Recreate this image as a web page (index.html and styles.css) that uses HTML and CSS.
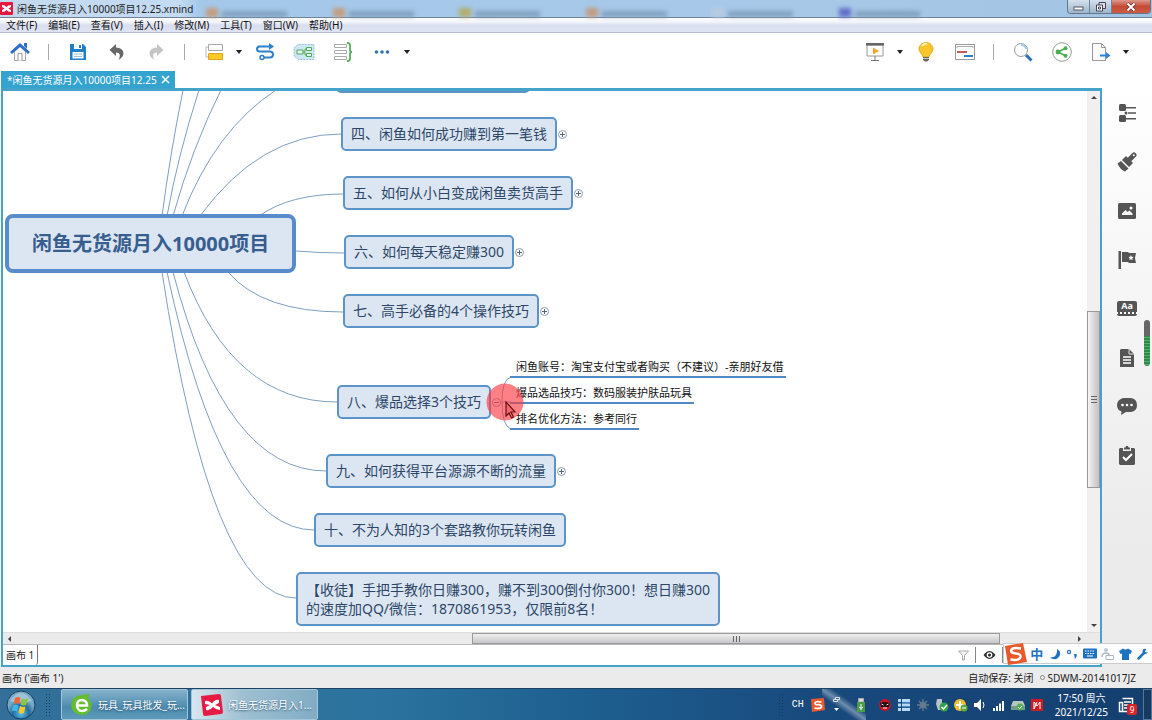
FILE: index.html
```
<!DOCTYPE html>
<html lang="zh-CN">
<head>
<meta charset="utf-8">
<title>闲鱼无货源月入10000项目12.25.xmind</title>
<link rel="stylesheet" href="styles.css">
</head>
<body>
<header class="titlebar">
  <svg class="app-logo" width="13" height="13" viewBox="0 0 13 13"><rect width="13" height="13" rx="1" fill="#e5173f"/><path d="M2 3q3 0 4.500 2Q8 3 11 3v2L8.500 6.500 11 8v2Q8 10 6.500 8 5 10 2 10V8l2.500-1.500L2 5z" fill="#fff"/></svg>
  <h1 class="title">闲鱼无货源月入10000项目12.25.xmind</h1>
  <div class="backdrop"><i class="o"></i><i class="o"></i><i class="y"></i><i class="o"></i><i class="w"></i><i class="b"></i></div>
  <div class="window-buttons">
    <button aria-label="最小化"><svg width="12" height="10" viewBox="0 0 12 10"><rect x="1" y="5" width="9" height="3" fill="#fff" stroke="#556" stroke-width="1"/></svg></button>
    <button aria-label="还原"><svg width="12" height="12" viewBox="0 0 12 12"><path d="M4 1.500h6.500v6H4z" fill="#dde" stroke="#445"/><path d="M1.500 4h6v6h-6z" fill="#fff" stroke="#445"/><path d="M3.500 6h2v2h-2z" fill="none" stroke="#445"/></svg></button>
    <button class="close" aria-label="关闭"><svg width="12" height="10" viewBox="0 0 12 10"><path d="M2.500 1.500l7 7M9.500 1.500l-7 7" stroke="#633" stroke-width="3.500"/><path d="M2.500 1.500l7 7M9.500 1.500l-7 7" stroke="#fff" stroke-width="2"/></svg></button>
  </div>
</header>

<nav class="menubar">
  <button>文件(F)</button><button>编辑(E)</button><button>查看(V)</button><button>插入(I)</button><button>修改(M)</button><button>工具(T)</button><button>窗口(W)</button><button>帮助(H)</button>
</nav>

<div class="toolbar">
  <div class="tools">
    <button class="tool" aria-label="主页"><svg width="20" height="20" viewBox="0 0 20 20"><path d="M4.500 9.500v9h11v-9L10 4.500z" fill="#fafafa" stroke="#aaa"/><path d="M8 18.500v-7h4v7" fill="#fff" stroke="#999"/><path d="M1 11L10 3l9 8" fill="none" stroke="#2c6fc4" stroke-width="3"/><path d="M14 1h3v6l-3-3z" fill="#2c6fc4"/></svg></button>
    <span class="sep"></span>
    <button class="tool" aria-label="保存"><svg width="18" height="18" viewBox="0 0 18 18"><path d="M1 1h13l3 3v13H1z" fill="#1f7fc8"/><path d="M5 1h8v5H5z" fill="#fff"/><path d="M10 2h2v3h-2z" fill="#1f7fc8"/><path d="M3.500 9h11v6.500h-11z" fill="#fff"/><path d="M5 11h8M5 13.500h8" stroke="#9bc4e6"/></svg></button>
    <button class="tool" aria-label="撤销"><svg width="18" height="18" viewBox="0 0 18 18"><path d="M8 1L1.500 7 8 13V9.500c4 0 5 3 2.500 7.500C18 13 17 5 8 4.500z" fill="#686868"/></svg></button>
    <button class="tool" aria-label="重做"><svg width="18" height="18" viewBox="0 0 18 18"><path d="M10 1l6.500 6L10 13V9.500c-4 0-5 3-2.500 7.500C0 13 1 5 10 4.500z" fill="#c5c5c5"/></svg></button>
    <span class="sep"></span>
    <button class="tool" aria-label="主题"><svg width="20" height="18" viewBox="0 0 20 18"><path d="M4.500 1.500h14v6h-14z" fill="#fff" stroke="#aaa"/><path d="M4 4H2v10h2" fill="none" stroke="#bbb"/><path d="M4.500 10.500h14v6h-14z" fill="#fbc926" stroke="#d9a720"/></svg></button>
    <button class="drop" aria-label="更多主题"></button>
    <button class="tool" aria-label="联系"><svg width="20" height="18" viewBox="0 0 20 18"><path d="M3 3.500h13M16 8.500H5c-4 0-4-5 0-5M5 8.500h10c4 0 4 6 0 6H8" fill="none" stroke="#2c80cc" stroke-width="2"/><path d="M14 0l5 3.500L14 7z" fill="#2c80cc"/><circle cx="7" cy="14.500" r="2" fill="#fff" stroke="#2c80cc" stroke-width="1.500"/></svg></button>
    <button class="tool" aria-label="外框"><svg width="22" height="18" viewBox="0 0 22 18"><path d="M1 5l4-3.500h16v15H5L1 13z" fill="#cfe7f3" stroke="#8fc1dc" stroke-dasharray="2 1"/><path d="M4 7h6v4H4zM13.500 4.500h5v3h-5zM13.500 10.500h5v3h-5zM10 9h2M13.500 6H12v6h1.500" fill="#eaf6f2" stroke="#4caa55"/></svg></button>
    <button class="tool" aria-label="概要"><svg width="22" height="20" viewBox="0 0 22 20"><path d="M2.500 2.500h12v3h-12zM2.500 8.500h12v3h-12zM2.500 14.500h12v3h-12z" fill="#fff" stroke="#aaa"/><path d="M15 1q3 0 3 2v5q0 2 2 2-2 0-2 2v5q0 2-3 2" fill="none" stroke="#58ad5d" stroke-width="1.800"/></svg></button>
    <button class="tool" aria-label="更多"><svg width="16" height="6" viewBox="0 0 16 6"><g fill="#3475ad"><circle cx="2.500" cy="3" r="1.800"/><circle cx="8" cy="3" r="1.800"/><circle cx="13.500" cy="3" r="1.800"/></g></svg></button>
    <button class="drop" aria-label="更多选项"></button>
  </div>
  <div class="tools tools-right">
    <button class="tool" aria-label="演示"><svg width="20" height="20" viewBox="0 0 20 20"><path d="M2 3h16v11H2z" fill="#fff" stroke="#999"/><path d="M1 1h18v2.500H1z" fill="#666"/><path d="M8 5.500l6 3.500-6 3.500z" fill="#f5a32a"/><path d="M10 14v4M6 18.500h8" stroke="#777"/></svg></button>
    <button class="drop" aria-label="演示选项"></button>
    <button class="tool" aria-label="头脑风暴"><svg width="18" height="20" viewBox="0 0 18 20"><path d="M9 .5c4 0 7 3 7 6.500 0 4-4 5-4 8H6c0-3-4-4-4-8C2 3.500 5 .5 9 .5z" fill="#fbc62b" stroke="#e2a91f"/><path d="M5 4q2-3 5-2" stroke="#fff3b8" stroke-width="2" fill="none"/><path d="M6 15h6v3l-2 1.500H8L6 18z" fill="#6a6558"/><path d="M6 16.500h6" stroke="#ccc"/></svg></button>
    <button class="tool" aria-label="甘特图"><svg width="20" height="16" viewBox="0 0 20 16"><path d="M.5.5h19v15H.5z" fill="#fff" stroke="#999"/><path d="M2 4V2.500h16V4" fill="none" stroke="#aaa"/><path d="M2 8h10" stroke="#c45b5b" stroke-width="2"/><path d="M9 12h9" stroke="#2c80c8" stroke-width="2"/></svg></button>
    <span class="sep"></span>
    <button class="tool" aria-label="搜索"><svg width="20" height="20" viewBox="0 0 20 20"><circle cx="8" cy="8" r="6.500" fill="#fff" stroke="#999"/><path d="M8 3q4 0 5 4" fill="none" stroke="#8ac6ee" stroke-width="1.500"/><path d="M13 13l5.500 5.500" stroke="#2c6fb4" stroke-width="3"/></svg></button>
    <button class="tool" aria-label="分享"><svg width="20" height="20" viewBox="0 0 20 20"><circle cx="10" cy="10" r="9.300" fill="#fff" stroke="#8c9c8c"/><path d="M14 6l-8 4 8 4" fill="none" stroke="#4aae4d" stroke-width="1.500"/><g fill="#4aae4d"><circle cx="13.500" cy="6.200" r="2"/><circle cx="6" cy="10" r="2.400"/><circle cx="13.500" cy="13.800" r="2"/></g></svg></button>
    <button class="tool" aria-label="导出"><svg width="20" height="20" viewBox="0 0 20 20"><path d="M1.500 1.500h9l4 4v13h-13z" fill="#fafafa" stroke="#999"/><path d="M10.500 1.500v4h4" fill="none" stroke="#999"/><path d="M9 13.500h8" stroke="#2f85dd" stroke-width="2"/><path d="M15 10l4.500 3.500L15 17z" fill="#2f85dd"/></svg></button>
    <button class="drop" aria-label="导出选项"></button>
  </div>
</div>

<div class="tabbar">
  <div class="tab"><span>*闲鱼无货源月入10000项目12.25</span><button class="tab-close" aria-label="关闭标签"><svg width="9" height="9" viewBox="0 0 9 9"><path d="M1 1l7 7M8 1L1 8" stroke="#fff" stroke-width="1.500"/></svg></button></div>
</div>

<div class="workspace">
  <section class="editor">
    <div class="view">
      <main class="map">
        <svg class="links" width="1084" height="541"><g transform="translate(-3 -91)" fill="none" stroke="#7d9fc0">
          <path d="M162 216Q170 155 183 90M167 216Q178 155 199 90M173 216Q192 148 221 90M182 216Q215 130 276 90"/>
          <path d="M200 216Q260 134 341 134M259 216Q290 194 343 194M296 251Q320 253 344 253M228 272Q262 312 343 312"/>
          <path d="M184 272Q233 402 337 402M173 272Q225 471 326 471M167 272Q222 530 314 530M162 272Q212 598 296 598"/>
          <path d="M502 402Q502 379 511 377M502 402H511M502 402Q502 426 511 429"/>
        </g></svg>
        <div class="central">闲鱼无货源月入10000项目</div>
        <div class="topic t3"><div class="node"></div></div>
        <div class="topic t4"><div class="node">四、闲鱼如何成功赚到第一笔钱</div><button class="fold" aria-label="展开"></button></div>
        <div class="topic t5"><div class="node">五、如何从小白变成闲鱼卖货高手</div><button class="fold" aria-label="展开"></button></div>
        <div class="topic t6"><div class="node">六、如何每天稳定赚300</div><button class="fold" aria-label="展开"></button></div>
        <div class="topic t7"><div class="node">七、高手必备的4个操作技巧</div><button class="fold" aria-label="展开"></button></div>
        <div class="topic t8"><div class="node">八、爆品选择3个技巧</div><button class="fold open" aria-label="收起"></button></div>
        <ul class="subtopics">
          <li>闲鱼账号<span class="mark">：</span>淘宝支付宝或者购买（不建议）-亲朋好友借</li>
          <li>爆品选品技巧<span class="mark">：</span>数码服装护肤品玩具</li>
          <li>排名优化方法<span class="mark">：</span>参考同行</li>
        </ul>
        <div class="topic t9"><div class="node">九、如何获得平台源源不断的流量</div><button class="fold" aria-label="展开"></button></div>
        <div class="topic t10"><div class="node">十、不为人知的3个套路教你玩转闲鱼</div></div>
        <div class="topic t11"><div class="node">【收徒】手把手教你日赚300<span class="mark">，</span>赚不到300倒付你300<span class="mark">！</span>想日赚300<br>的速度加QQ/微信<span class="mark">：</span>1870861953<span class="mark">，</span>仅限前8名<span class="mark">！</span></div></div>
        <div class="pointer"><svg width="38" height="38" viewBox="0 0 38 38"><circle cx="19" cy="19" r="18.500" fill="#fb3c43" fill-opacity=".65"/><path d="M20 19v14l3-3 2.500 5 2-1-2.500-5h4z" fill="#f4696e" stroke="#611" stroke-width="1.200"/></svg></div>
      </main>
      <div class="vscroll"><span class="arrow up"></span><span class="before"></span><span class="thumb"></span><span class="after"></span><span class="arrow down"></span></div>
    </div>
    <div class="hscroll"><span class="arrow left"></span><span class="before"></span><span class="thumb"></span><span class="after"></span><span class="arrow right"></span></div>
    <div class="sheets">
      <button class="sheet">画布 1</button>
      <div class="sheet-tools">
        <button aria-label="筛选"><svg width="11" height="11" viewBox="0 0 11 11"><path d="M.5 1h10L6.500 5.500V10h-2V5.500z" fill="#f4f4f4" stroke="#aaa"/></svg></button>
        <button class="eye" aria-label="显示"><svg width="13" height="10" viewBox="0 0 13 10"><path d="M.5 5Q6.500-3 12.500 5 6.500 13 .5 5z" fill="#333"/><circle cx="6.500" cy="5" r="2.800" fill="#fff"/><circle cx="6.500" cy="5" r="1.600" fill="#333"/></svg></button>
      </div>
    </div>
  </section>
  <aside class="panels">
    <button aria-label="大纲"><svg width="18" height="18" viewBox="0 0 18 18" fill="#555"><rect x="1" width="7" height="7" rx="1.500"/><rect x="1" y="11" width="7" height="7" rx="1.500"/><path d="M8 3h10v1.500H8zM8 14h10v1.500H8zM10 8.200h8v1.600h-8z"/><circle cx="8" cy="9" r="1.500"/></svg></button>
    <button aria-label="格式"><svg width="20" height="20" viewBox="0 0 20 20"><path d="M.5 11.500L4 9l7.500 7.500L8 19.500q-5-2-7.500-8z" fill="#555"/><path d="M5 8l4-4 7 7-4 4z" fill="#555"/><path d="M13 7l4-4" stroke="#555" stroke-width="5" stroke-linecap="round"/><circle cx="16.800" cy="3.200" r="1" fill="#fff"/></svg></button>
    <button aria-label="图片"><svg width="18" height="16" viewBox="0 0 18 16"><rect width="18" height="16" rx="1.500" fill="#555"/><path d="M4 12V10.500L7.500 7l2 2 2-1.500 3 3V12z" fill="#fff"/><circle cx="13" cy="5" r="1.500" fill="#fff"/></svg></button>
    <button aria-label="图标"><svg width="18" height="18" viewBox="0 0 18 18"><path d="M.5 0H3v18H.5zM4 1h6l1 1h7l-1 5 1 5h-7l-1-1H4z" fill="#555"/><path d="M13 4l.8 1.700 1.800.3-1.300 1.300.3 1.800-1.600-.9-1.600.9.300-1.800L10.400 6l1.800-.3z" fill="#fff"/></svg></button>
    <button class="style-panel" aria-label="风格"><span>Aa</span></button>
    <button aria-label="备注"><svg width="14" height="18" viewBox="0 0 14 18"><path d="M1 0h8l5 5v13H0V1z" fill="#555"/><path d="M9 0v5h5" fill="none" stroke="#ddd"/><path d="M3 8h8M3 11h8M3 14h8" stroke="#fff" stroke-width="1.300"/></svg></button>
    <button aria-label="批注"><svg width="20" height="17" viewBox="0 0 20 17"><path d="M6 0h8q6 1 6 7t-6 7H9l-5 3 .5-3.500Q0 12 0 7t6-7z" fill="#555"/><g fill="#fff"><circle cx="5.500" cy="7" r="1.300"/><circle cx="10" cy="7" r="1.300"/><circle cx="14.500" cy="7" r="1.300"/></g></svg></button>
    <button aria-label="任务"><svg width="16" height="19" viewBox="0 0 16 19"><path d="M1 2h3v3h8V2h3l1 1v15l-1 1H1l-1-1V3z" fill="#555"/><path d="M5 3.500V1.500h1.500L7 0h2l.5 1.500H11v2z" fill="#555"/><path d="M4 11l3 3 6-6" fill="none" stroke="#fff" stroke-width="2"/></svg></button>
  </aside>
  <div class="meter"></div>
  <div class="ime">
    <svg class="ime-logo" width="24" height="24" viewBox="0 0 24 24"><path d="M1 4L19 1l4 19-19 3z" fill="#e8592b"/><path d="M17 6.500Q8 5 7 8.500q0 2.500 5 3 5 .5 4.500 3.500-1 4-10 2.500" fill="none" stroke="#fff" stroke-width="2.500"/></svg>
    <button class="zh">中</button>
    <button aria-label="半角"><svg width="12" height="12" viewBox="0 0 12 12"><path d="M8 1q4 2 3 6-2 5-7 4-2-.5-3-2 4 1 6-2 1.500-3 1-6z" fill="#1e73c0"/></svg></button>
    <button aria-label="标点"><svg width="12" height="12" viewBox="0 0 12 12"><circle cx="3" cy="4" r="1.600" fill="none" stroke="#1e73c0" stroke-width="1.300"/><path d="M8 6h2.500q1 3-2 5 .5-1.500 0-2.500z" fill="#1e73c0"/></svg></button>
    <button aria-label="软键盘"><svg width="14" height="11" viewBox="0 0 14 11"><rect width="14" height="10" y=".5" rx="1" fill="#1e73c0"/><path d="M2 3h10M2 5.500h10" stroke="#fff" stroke-dasharray="1.500 1"/><path d="M4 8h6" stroke="#fff"/></svg></button>
    <button aria-label="账号"><svg width="13" height="13" viewBox="0 0 13 13"><circle cx="5" cy="3" r="2" fill="#bbc8d2"/><path d="M1 10q0-4 4-4 3 0 3 2" fill="none" stroke="#aab8c4" stroke-width="1.500"/><path d="M5 8.500h7.500v4H5z" fill="#fff" stroke="#aab8c4"/></svg></button>
    <button aria-label="皮肤"><svg width="13" height="12" viewBox="0 0 13 12"><path d="M4 .5q2.500 2 5 0L13 3l-1.500 3L10 5.500V12H3V5.500L1.500 6 0 3z" fill="#1e73c0"/></svg></button>
    <button aria-label="工具箱"><svg width="12" height="12" viewBox="0 0 12 12"><path d="M1.500 10.500l5-5" stroke="#1e73c0" stroke-width="2.500" stroke-linecap="round"/><path d="M9.500 1Q5 0 5.500 4.500 8 8 11.500 4L9 4.500 7.800 3.500z" fill="#1e73c0"/></svg></button>
  </div>
</div>

<footer class="statusbar"><span>画布 ('画布 1')</span><span class="status-right"><span>自动保存: 关闭</span><span class="user"><i></i>SDWM-20141017JZ</span></span></footer>

<div class="taskbar">
  <button class="start" aria-label="开始"><svg width="30" height="30" viewBox="0 0 30 30"><defs><radialGradient id="orb" cy=".8"><stop offset="0" stop-color="#58c3e8"/><stop offset=".6" stop-color="#246b9d"/><stop offset="1" stop-color="#76a9c5"/></radialGradient></defs><circle cx="15" cy="15" r="14" fill="url(#orb)" stroke="#183f61"/><path d="M4 11Q15-5 26 11 15 15 4 11z" fill="#fff" opacity=".3"/><path d="M9 8q3-2 5.500 0L13 14q-3-1.500-5.500 0z" fill="#f1653a"/><path d="M16 8.500q3 1.500 6 0L20 15q-3 1-5.500-.5z" fill="#8cc73e"/><path d="M7 15.500q3-1.500 5.500 0L11 21.500q-3-1.500-5.500 0z" fill="#41b6ed"/><path d="M14 16q3 1.500 5.500.5L18 23q-3 1-5.500-.5z" fill="#fbc927"/></svg></button>
  <span class="grip"></span>
  <button class="task"><svg width="24" height="24" viewBox="0 0 24 24"><path d="M18 5q3-3 1-4-2 0-5 1-9-1-12 6-3 9 5 13 8 3 13-3 4-7-2-13z" fill="#63bd2c"/><path d="M17 12.500H7q0-5.500 5-5.500 5 .5 5 5.500zM7 12.500Q7.500 18 12 18q3 0 5-2" fill="none" stroke="#fff" stroke-width="2.500"/></svg><span>玩具_玩具批发_玩...</span></button>
  <button class="task active"><svg width="24" height="24" viewBox="0 0 24 24"><path d="M1 3l18-2q2 0 2 2l2 16q0 2-2 2L5 23q-2 0-2-2z" fill="#e51b43"/><path d="M5 8q4-1 7 2.500Q15 6 19 7v3l-4 2 5 2v3q-4 0-7-3-3 4-7 3v-3l4-2-5-1z" fill="#fff"/></svg><span>闲鱼无货源月入1...</span></button>
  <div class="tray">
    <span class="grip"></span>
    <span class="lang">CH</span>
    <svg class="ti" width="14" height="14" viewBox="0 0 14 14"><path d="M0 1L13 0l1 12-13 2z" fill="#e8592b"/><path d="M10.500 4Q4 3 4 5t3.500 1.700q3.500.3 3 2.300-1 2-7 1.200" fill="none" stroke="#fff" stroke-width="1.700"/></svg>
    <svg class="ti" width="14" height="18" viewBox="0 0 14 18"><path d="M5.500 1.500h4v2h-4zM3.500 3.500h4v2h-4z" fill="#34597f" stroke="#dfe8f0"/><path d="M4 12h5l-2.500 3z" fill="#fff"/></svg>
    <svg class="ti usb" width="12" height="14" viewBox="0 0 12 14"><path d="M3.500.5h5V4h-5z" fill="#ddd" stroke="#aaa"/><rect x="2" y="4" width="8" height="10" fill="#4a9d45"/><path d="M6 6v6M4 9l2 1.500L8 9" stroke="#fff" fill="none"/></svg>
    <svg class="ti" width="14" height="14" viewBox="0 0 14 14"><circle cx="7" cy="7" r="6" fill="#c81525"/><path d="M2 5q5-2 10 0l-1 4H3z" fill="#251014"/><path d="M3.500 6l2 1M10.500 6l-2 1M5 10h4" stroke="#eee"/></svg>
    <svg class="ti" width="14" height="14" viewBox="0 0 14 14"><path d="M1 1h3v3H1zM1 5.500h3v3H1zM1 10h3v3H1zM5 1h8v3H5zM5 5.500h8v3H5zM5 10h8v3H5z" fill="#b8d8f4"/><path d="M5 4.500h8M5 9h8" stroke="#2d83d4"/></svg>
    <svg class="ti" width="14" height="14" viewBox="0 0 14 14"><circle cx="7" cy="7" r="3.500" fill="#526f88"/><path d="M7 1v12M1 7h12M3 3l8 8M11 3l-8 8" stroke="#657c91" stroke-width="1.300"/></svg>
    <svg class="ti" width="14" height="14" viewBox="0 0 14 14"><path d="M2 1h5v4l2 2v5H3L1 6z" fill="#b8c3ca"/><circle cx="9" cy="9" r="4.500" fill="#34a247"/><path d="M6.500 9l2 2L12 7" stroke="#fff" stroke-width="1.500" fill="none"/></svg>
    <svg class="ti" width="14" height="14" viewBox="0 0 14 14"><circle cx="6" cy="7" r="6" fill="#f2bf2d"/><path d="M6 3v8M2 7h8" stroke="#fff" stroke-width="2"/><circle cx="10" cy="10" r="3.500" fill="#5da83d"/><path d="M8 10h4" stroke="#fff"/></svg>
    <svg class="ti" width="14" height="14" viewBox="0 0 14 14"><path d="M1 5h3l4-4v12L4 9H1z" fill="#fff"/><path d="M10 4q2 3 0 6" fill="none" stroke="#fff"/></svg>
    <svg class="ti" width="14" height="14" viewBox="0 0 14 14"><path d="M1 10h2v3H1zM4 8h2v5H4zM7 5.500h2V13H7zM10 3h2v10h-2z" fill="#fff"/></svg>
    <svg class="ti" width="14" height="14" viewBox="0 0 14 14"><path d="M2 3h10l2 5H0z" fill="#b5c8ba"/><path d="M0 8h14v4H0z" fill="#789b85"/><circle cx="9" cy="9" r="3.500" fill="#56ae62"/><path d="M7 9l1.500 1.500L11 8" fill="none" stroke="#fff"/></svg>
    <svg class="ti" width="14" height="14" viewBox="0 0 14 14"><rect x="1" y="1" width="12" height="12" fill="#cc1d1f"/><path d="M4 11V4l3 4 3-4v7M4 11l3-7" fill="none" stroke="#fff"/></svg>
    <time class="clock">17:50 周六<br>2021/12/25</time>
    <div class="news"><svg width="16" height="16" viewBox="0 0 16 16"><path d="M1.500 5.500h3v9h-3zM4.500 1.500h10v13h-12" fill="none" stroke="#fff" stroke-width="1.500"/><path d="M6 5h7M6 8h7M6 11h5" stroke="#fff" stroke-width="1.500"/></svg><span>9</span></div>
    <button class="show-desktop" aria-label="显示桌面"></button>
  </div>
</div>
</body>
</html>
```
FILE: styles.css
```
* { box-sizing: border-box; }
html, body { height: 100%; margin: 0; }
body {
  display: flex; flex-direction: column; overflow: hidden;
  background: #fff; color: #222;
  font: 10px/14px "Noto Sans", "Noto Sans CJK SC", sans-serif;
  white-space: nowrap;
}
button { padding: 0; border: 0; background: none; color: inherit; font: inherit; }
svg { display: block; flex: none; }

/* window frame */
.titlebar {
  display: flex; align-items: center; height: 18px; flex: none;
  border-bottom: 1px solid #71839a;
  background: linear-gradient(90deg, #c3d9ee, #c3dbf3 180px, #a4c8ea 200px, #a8c8e8 70%, #a3c3e3);
}
.title { margin: 0; padding-left: 4px; font-size: 10px; font-weight: 400; line-height: 16px; }
.backdrop { flex: 1; display: flex; align-self: flex-end; justify-content: space-between; padding: 0 216px 0 13px; filter: blur(2px); }
.backdrop i { display: flex; width: 12px; height: 9px; background: #c39d80; }
.backdrop i::after { content: ""; flex: none; width: 65px; height: 6px; margin: 3px 0 0 16px; background: #7897b5; opacity: .8; }
.backdrop .y { background: #b1ad69; }
.backdrop .w { background: #b8cbe0; }
.backdrop .b { background: #626fc9; }
.window-buttons { display: flex; align-self: flex-start; height: 14px; margin-right: 1px; border: 1px solid #63768c; border-top: 0; border-radius: 0 0 4px 4px; overflow: hidden; }
.window-buttons button { display: grid; place-items: center; width: 22px; border-right: 1px solid #71839a; background: linear-gradient(#d3e0ee, #9fb5cc); }
.window-buttons .close { width: 38px; border: 0; background: linear-gradient(#dc9a8d, #c44a36 50%, #cf5b42); }

.menubar { display: flex; flex: none; gap: 11px; height: 15px; padding-left: 6px; border-bottom: 1px solid #b4bbcb; background: linear-gradient(#fff, #f2f4fa 30%, #d9def0 50%, #dfe4f3); }
.menubar button { line-height: 14px; color: #111; }

.toolbar { display: flex; flex: none; justify-content: space-between; height: 38px; }
.tools { display: flex; align-items: stretch; }
.tools-right { padding-right: 20px; }
.tool { display: grid; place-items: center; width: 39px; }
.sep { width: 19px; margin: 11px 0; background: linear-gradient(#aaa, #aaa) center / 1px 100% no-repeat; }
.drop { display: grid; place-items: center; width: 12px; }
.drop::before { content: ""; border: 3px solid transparent; border-top: 4px solid #222; border-bottom: 0; }

.tabbar { display: flex; flex: none; height: 17px; padding-left: 1px; }
.tab { display: flex; align-items: center; gap: 4px; padding: 0 5px 0 6px; background: #35a3d0; color: #fff; }

/* editor */
.workspace { position: relative; display: flex; flex: 1; min-height: 0; }
.editor { display: flex; flex-direction: column; flex: 1; min-width: 0; margin-left: 1px; border: 2px solid #45a2c8; border-top-width: 3px; }
.view { display: flex; flex: 1; min-height: 0; }
.map { position: relative; flex: 1; overflow: hidden; background: #fff; }
.links { position: absolute; inset: 0; }

.central {
  position: absolute; left: 2px; top: 123px; padding: 12px 23px;
  border: 4px solid #588bcb; border-radius: 8px; background: #dce6f2;
  color: #385d8f; font-size: 20px; font-weight: 700; line-height: 27px;
}
.topic { position: absolute; display: flex; align-items: center; gap: 1px; }
.node { padding: 6px 8px; border: 2px solid #5c93c9; border-radius: 5px; background: #dce6f2; color: #2d4668; font-size: 14px; line-height: 18px; }
.mark { font-family: "Noto Sans CJK TC", sans-serif; }
.t3 { left: 333px; top: -32px; }
.t3 .node { width: 194px; height: 34px; }
.t4 { left: 338px; top: 26px; }
.t5 { left: 340px; top: 85px; }
.t6 { left: 341px; top: 144px; }
.t7 { left: 340px; top: 203px; }
.t8 { left: 334px; top: 294px; }
.t9 { left: 323px; top: 363px; }
.t10 { left: 311px; top: 422px; }
.t11 { left: 293px; top: 481px; }
.fold { display: grid; place-items: center; width: 9px; height: 9px; border: 1px solid #8c9bb2; border-radius: 50%; background: #fff; }
.fold::before { content: ""; width: 5px; height: 5px; background: linear-gradient(#567, #567) center / 5px 1px no-repeat, linear-gradient(#567, #567) center / 1px 5px no-repeat; }
.fold.open::before { background: linear-gradient(#567, #567) center / 5px 1px no-repeat; }

.subtopics { position: absolute; left: 507px; top: 261px; display: flex; flex-direction: column; align-items: flex-start; margin: 0; padding: 0; list-style: none; }
.subtopics li { height: 26px; padding: 6px 2px 0 6px; border-bottom: 2px solid #5089c6; color: #111; font-size: 11px; line-height: 16px; }
.pointer { position: absolute; left: 483px; top: 292px; }

.vscroll { display: flex; flex-direction: column; width: 13px; background: #f0f0f0; }
.hscroll { display: flex; height: 13px; flex: none; padding: 0 14px 0 0; border-top: 1px solid #ddd; border-bottom: 1px solid #b8b8b8; background: #ebebeb; }
.arrow { display: grid; place-items: center; flex: none; width: 13px; height: 13px; }
.hscroll .arrow { height: 11px; }
.arrow::before { content: ""; border: 3px solid transparent; }
.up::before { border-top: 0; border-bottom-color: #444; }
.down::before { border-bottom: 0; border-top-color: #444; }
.left::before { border-left: 0; border-right-color: #444; }
.right::before { border-right: 0; border-left-color: #444; }
.thumb { display: grid; place-items: center; border: 1px solid #999; }
.thumb::before { content: ""; }
.vscroll .before { flex: 207; }
.vscroll .thumb { flex: 176; background: linear-gradient(90deg, #f6f6f6, #dcdcdc 45%, #c2c2c8); }
.vscroll .thumb::before { width: 6px; height: 7px; background: repeating-linear-gradient(#666 0 1px, transparent 1px 3px); }
.vscroll .after { flex: 131; }
.hscroll .before { flex: 457; }
.hscroll .thumb { flex: 527; background: linear-gradient(#f0f0f0, #dcdcdc 45%, #c8c8cc); }
.hscroll .thumb::before { width: 7px; height: 6px; background: repeating-linear-gradient(90deg, #666 0 1px, transparent 1px 3px); }
.hscroll .after { flex: 73; }

.sheets { display: flex; justify-content: space-between; flex: none; height: 20px; }
.sheet { padding: 0 3px; border-right: 1px solid #777; border-radius: 0 0 3px 0; }
.sheet-tools { display: flex; align-items: center; padding-right: 97px; }
.sheet-tools button { display: grid; place-items: center; width: 24px; height: 16px; border-right: 1px solid #888; }
.sheet-tools .eye { width: 27px; }

.panels { display: flex; flex-direction: column; width: 50px; background: linear-gradient(#fff, #f7f7f7 30%, #ebebeb 80%); }
.panels button { display: grid; place-items: center; height: 49px; }
.style-panel span { width: 20px; height: 15px; border-radius: 2px; background: radial-gradient(circle, #fff 1px, transparent 1px) 2px 10px / 4px 4px repeat-x, #555; color: #fff; font-size: 9px; font-weight: 700; line-height: 10px; }
.meter { position: absolute; right: 2px; top: 232px; width: 6px; height: 46px; border-radius: 3px; background: linear-gradient(#666 16px, transparent 16px), repeating-linear-gradient(#2c8b4a 0 2px, #56b06c 2px 3px); }

.ime { position: absolute; right: 0; bottom: 3px; display: flex; align-items: center; width: 149px; height: 21px; border: 1px solid #ccc; border-right: 0; background: #fff; }
.ime button { display: grid; place-items: center; flex: 1; color: #1e73c0; }
.ime .zh { font-size: 13px; font-weight: 700; line-height: 18px; }

.statusbar { display: flex; align-items: center; justify-content: space-between; flex: none; height: 21px; padding: 0 16px 0 2px; background: #ebebeb; }
.status-right { display: flex; gap: 6px; }
.user { display: flex; align-items: center; gap: 3px; }
.user i { width: 5px; height: 5px; border: 1px solid #888; border-radius: 50%; }

/* taskbar */
.taskbar {
  display: flex; align-items: stretch; flex: none; gap: 3px; height: 32px;
  border-top: 1px solid #1c4163; color: #fff;
  background: linear-gradient(to top right, transparent 38%, #ffffff60 50%, transparent 62%) 822px 0 / 44px 100% no-repeat, linear-gradient(90deg, #336f99, #2c749f 32%, #1e6090 50%, #194a7e 70%, #143f6f);
}
.start { display: grid; place-items: center; width: 42px; }
.grip { width: 7px; margin: 4px 0; background: radial-gradient(circle, #153b5c 1px, transparent 1px) 0 0 / 3px 3px; }
.task { display: flex; align-items: center; gap: 4px; width: 127px; padding: 0 8px; border: 1px solid #a4c6d9; border-radius: 2px; background: linear-gradient(#85b3cb, #4c8bae 60%, #5d9aba); }
.task:nth-of-type(2) { margin-left: 6px; }
.task.active { background: linear-gradient(90deg, #d8e6ee, #a0c0d2 40%, #81acc4); }
.task span { text-shadow: 0 1px 2px #25516d; }
.tray { display: flex; align-items: center; margin-left: auto; }
.tray .grip { align-self: stretch; }
.lang { padding: 0 5px 0 7px; font: 10px/14px "Liberation Mono", monospace; }
.ti { margin: 0 3px 0 2px; }
.tray .usb { margin: 0 9px 0 8px; }
.clock { margin: 0 10px 0 8px; line-height: 14px; text-align: center; }
.news { position: relative; padding-right: 9px; }
.news span { position: absolute; left: 9px; top: 7px; width: 10px; height: 11px; border-radius: 2px; background: #dc2326; font-size: 8px; line-height: 11px; text-align: center; }
.show-desktop { align-self: stretch; width: 9px; border: 1px solid #50799b; background: #173b60; }
```
